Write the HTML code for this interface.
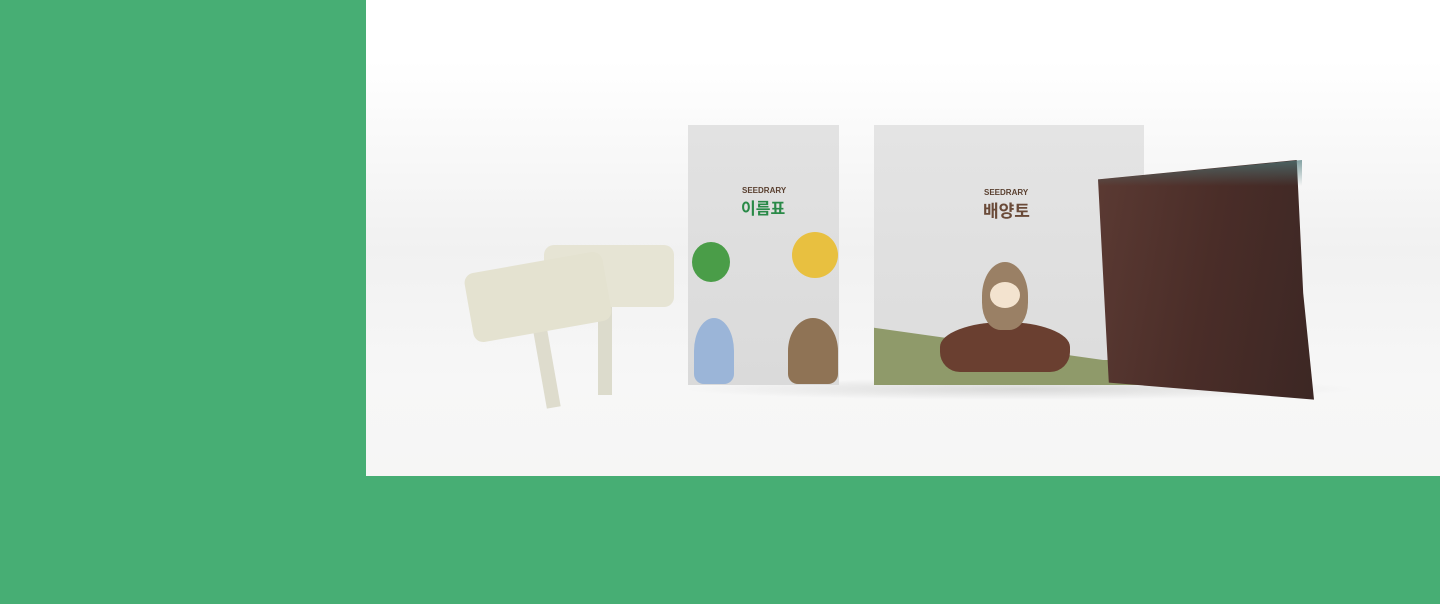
<!DOCTYPE html><html><head><meta charset="utf-8"><style>
body{margin:0;width:1440px;height:604px;background:#47ae74;position:relative;overflow:hidden;font-family:"Liberation Sans","Noto Sans CJK KR",sans-serif}
.a{position:absolute}
</style></head><body>
<div class="a" style="left:366px;top:0;width:1074px;height:476px;background:linear-gradient(#fff 0,#fff 60px,#f1f1f1 250px,#f7f7f7 380px,#f6f6f5 476px)"></div>
<div class="a" style="left:680px;top:378px;width:680px;height:22px;background:radial-gradient(ellipse at center,rgba(0,0,0,.12),rgba(0,0,0,0) 70%)"></div>
<div class="a" style="left:598px;top:300px;width:14px;height:95px;background:#dcdbcc"></div>
<div class="a" style="left:544px;top:245px;width:130px;height:62px;background:#e6e4d4;border-radius:10px"></div>
<div class="a" style="left:540px;top:330px;width:14px;height:78px;background:#dedccd;transform:rotate(-10deg)"></div>
<div class="a" style="left:468px;top:262px;width:140px;height:70px;background:#e4e2d0;border-radius:10px;transform:rotate(-10deg)"></div>
<div class="a" style="left:688px;top:125px;width:151px;height:260px;background:linear-gradient(#e2e2e2,#dadada)"></div>
<div class="a" style="left:742px;top:186px;font-size:8px;font-weight:bold;color:#5a4030">SEEDRARY</div>
<div class="a" style="left:741px;top:195px;font-size:16px;font-weight:bold;color:#2a8a48">이름표</div>
<div class="a" style="left:692px;top:242px;width:38px;height:40px;border-radius:50%;background:#4a9d48"></div>
<div class="a" style="left:792px;top:232px;width:46px;height:46px;border-radius:50%;background:#e8c040"></div>
<div class="a" style="left:694px;top:318px;width:40px;height:66px;border-radius:50% 50% 10px 10px;background:#9bb5d8"></div>
<div class="a" style="left:788px;top:318px;width:50px;height:66px;border-radius:50% 50% 10px 10px;background:#8f7355"></div>
<div class="a" style="left:874px;top:125px;width:270px;height:260px;background:linear-gradient(#e4e4e4,#dcdcdc);overflow:hidden">
<div class="a" style="left:-20px;top:200px;width:320px;height:80px;background:#8f9a6a;transform:rotate(8deg);transform-origin:0 0"></div>
<div class="a" style="left:-10px;top:235px;width:300px;height:40px;background:#8f9a6a"></div>
</div>
<div class="a" style="left:984px;top:188px;font-size:8px;font-weight:bold;color:#5a4030">SEEDRARY</div>
<div class="a" style="left:983px;top:197px;font-size:17px;font-weight:bold;color:#6a4a38">배양토</div>
<div class="a" style="left:940px;top:322px;width:130px;height:50px;border-radius:50% 50% 20px 20px;background:#6a3f30"></div>
<div class="a" style="left:982px;top:262px;width:46px;height:68px;border-radius:50% 50% 40% 40%;background:#9a8065"></div>
<div class="a" style="left:990px;top:282px;width:30px;height:26px;border-radius:50%;background:#f3e3cf"></div>
<div class="a" style="left:1098px;top:160px;width:216px;height:242px;background:linear-gradient(100deg,#5b3a33,#4a2d28 50%,#3c2724);clip-path:polygon(0 8%,92% 0,95% 55%,100% 99%,5% 92%)"></div>
<div class="a" style="left:1098px;top:160px;width:204px;height:26px;background:linear-gradient(#4f7c7d,rgba(79,124,125,0));clip-path:polygon(0 75%,100% 0,100% 100%,0 100%);opacity:.7"></div>
</body></html>
